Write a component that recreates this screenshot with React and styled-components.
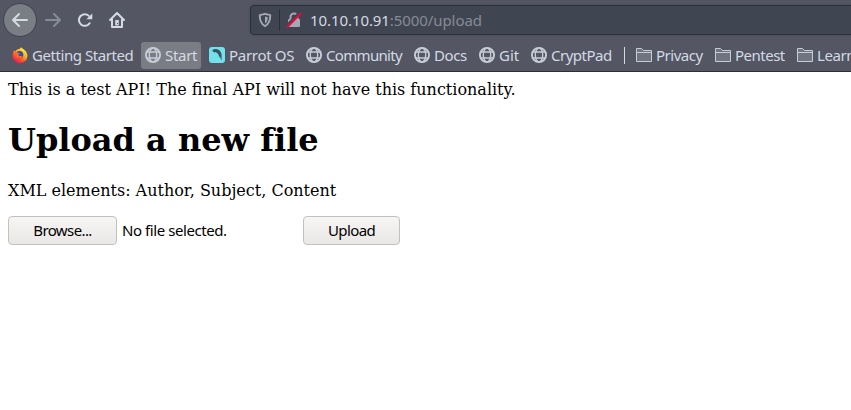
import React from "react";
import styled, { createGlobalStyle } from "styled-components";

const GlobalStyle = createGlobalStyle`
  * { box-sizing: border-box; }
  body { margin: 0; background: #fff; overflow: hidden; }
`;

const Browser = styled.div`
  width: 100vw;
  height: 100vh;
  overflow: hidden;
  background: #fff;
`;

const Chrome = styled.header`
  height: 72px;
  background: #545663;
  border-bottom: 1px solid #2b2d3b;
  font-family: "Noto Sans", "Open Sans", sans-serif;
  color: #d3dae3;
  overflow: hidden;
`;

const NavBar = styled.nav`
  display: flex;
  align-items: center;
  height: 40px;
  padding-left: 3px;
`;

const BackButton = styled.button`
  display: flex;
  align-items: center;
  justify-content: center;
  flex: none;
  width: 34px;
  height: 34px;
  padding: 0;
  border: 1px solid #3e404d;
  border-radius: 50%;
  background: #7b7d85;
`;

const NavButton = styled.button`
  display: flex;
  align-items: center;
  justify-content: center;
  flex: none;
  width: 32px;
  height: 32px;
  padding: 0;
  border: 0;
  background: none;
  opacity: ${(p) => (p.disabled ? 0.4 : 1)};
`;

const AddressBar = styled.div`
  display: flex;
  align-items: center;
  flex: none;
  width: 640px;
  height: 30px;
  margin-left: 117px;
  padding-left: 6px;
  border: 1px solid #2b2e3b;
  border-radius: 4px;
  background: #404552;
  box-shadow: 0 0 3px rgba(40, 42, 54, 0.25);
`;

const AddressDivider = styled.span`
  width: 1px;
  height: 22px;
  margin: 0 6px;
  background: #2b2e3b;
`;

const Url = styled.span`
  margin-left: 8px;
  font-size: 15px;
  line-height: 20px;
  letter-spacing: -0.08px;
  white-space: nowrap;
`;

const UrlPath = styled.span`
  color: #858b95;
`;

const Bookmarks = styled.div`
  display: flex;
  align-items: center;
  gap: 4px;
  height: 31px;
  padding: 0 0 1px 8px;
`;

const Bookmark = styled.a`
  display: flex;
  align-items: center;
  flex: none;
  gap: 4px;
  width: ${(p) => p.$width}px;
  height: 27px;
  padding: 0 4px;
  border-radius: 3px;
  background: ${(p) => (p.$active ? "#7b7d85" : "transparent")};
  font-size: 15px;
  line-height: 20px;
  letter-spacing: ${(p) => p.$spacing || 0}px;
  white-space: nowrap;
`;

const BookmarkDivider = styled.span`
  flex: none;
  width: 1px;
  height: 17px;
  margin: 0 3px 0 5px;
  background: #d3dae3;
`;

const Icon = styled.svg`
  display: block;
  flex: none;
  width: 16px;
  height: 16px;
  overflow: visible;
`;

const Page = styled.main`
  padding: 8px;
  color: #000;
  font: 16px/19px "DejaVu Serif", serif;
`;

const Line = styled.p`
  margin: 0;
`;

const Title = styled.h1`
  margin: 22px 0;
  font-size: 32px;
  line-height: 38px;
  font-weight: bold;
  font-variant-ligatures: none;
`;

const UploadForm = styled.form`
  display: flex;
  align-items: center;
  margin-top: 16px;
  font: 15px/20px "Noto Sans", "Open Sans", sans-serif;
`;

const FormButton = styled.button`
  flex: none;
  width: ${(p) => p.$width}px;
  height: 29px;
  padding: 0 0 2px;
  border: 1px solid #c4c1bc;
  border-radius: 4px;
  background: linear-gradient(#f6f5f4, #eae8e6);
  color: #000;
  font: inherit;
  letter-spacing: -0.6px;
`;

const FileStatus = styled.span`
  flex: none;
  width: 181px;
  padding-bottom: 2px;
  margin-left: 5px;
  letter-spacing: -0.43px;
`;

const Arrow = ({ right }) => (
  <Icon viewBox="0 0 16 16" fill="none" stroke="#d3dae3" strokeWidth="2" strokeLinecap="round" strokeLinejoin="round">
    <path d={right ? "M1 8h14M9 2l6 6-6 6" : "M15 8H1M7 2L1 8l6 6"} />
  </Icon>
);

const Reload = () => (
  <Icon viewBox="0 0 16 16">
    <path d="M12.6 11.2A5.8 5.8 0 1 1 11.8 3.900" fill="none" stroke="#d3dae3" strokeWidth="2" strokeLinecap="round" />
    <path d="M15.300 1.400v5.300a.6.6 0 0 1-.6.6H9.400z" fill="#d3dae3" />
  </Icon>
);

const Home = () => (
  <Icon viewBox="0 0 16 16" fill="none" stroke="#d3dae3" strokeWidth="2" strokeLinecap="round" strokeLinejoin="round">
    <path d="M1 8l7-7 7 7M3 7.500V15h10V7.500" />
    <path d="M8 8v5.500" strokeWidth="3.500" strokeLinecap="butt" />
    <path d="M8.500 11v1" stroke="#545663" strokeWidth="1" strokeLinecap="butt" />
  </Icon>
);

const Shield = () => (
  <Icon viewBox="0 0 16 16">
    <path d="M8 1.800l5.300 1.300c0 5.500-1.200 9-5.300 11.100C3.900 12.100 2.700 8.600 2.700 3.100z" fill="none" stroke="#a3a9b2" strokeWidth="1.900" strokeLinejoin="round" />
    <path d="M8 4.400v7.100c1.900-1.400 2.700-3.400 2.800-6.300z" fill="#a3a9b2" />
  </Icon>
);

const InsecureLock = () => (
  <Icon viewBox="0 0 16 16">
    <path d="M4.500 8V5a3.500 3.500 0 0 1 7 0v3" fill="none" stroke="#a3a9b2" strokeWidth="2" />
    <rect x="2" y="7" width="12" height="8" rx="1" fill="#a3a9b2" />
    <path d="M1 14L14 .6" stroke="#404552" strokeWidth="3.500" />
    <path d="M1.800 14.600L14.600 1.600" stroke="#ff0039" strokeWidth="2" strokeLinecap="round" />
  </Icon>
);

const Globe = () => (
  <Icon viewBox="0 0 16 16" fill="none" stroke="#c6cbd6">
    <circle cx="8" cy="8" r="7.100" strokeWidth="1.900" />
    <ellipse cx="8" cy="8" rx="3.700" ry="7" strokeWidth="1.400" />
    <path d="M2 5h12M2 11h12" strokeWidth="1.500" />
  </Icon>
);

const Folder = () => (
  <Icon viewBox="0 0 16 16">
    <path d="M.5 14.500v-13h5l2 2h8v11z" fill="#707380" stroke="#c6cbd6" strokeLinejoin="round" />
    <path d="M1 5.500h14.500" stroke="#c6cbd6" />
  </Icon>
);

const Firefox = () => (
  <Icon viewBox="0 0 16 16">
    <defs>
      <linearGradient id="flame" x1=".85" y1="0" x2=".2" y2="1">
        <stop stopColor="#fff44f" />
        <stop offset=".38" stopColor="#ffb31d" />
        <stop offset=".7" stopColor="#ff4b2d" />
        <stop offset="1" stopColor="#e20b72" />
      </linearGradient>
    </defs>
    <path d="M2.300 3.200l1 1.400C4.400 2.500 6 2 7.500 2L9 .2c1.100 1.300 2.300 1.700 3.500 2.700 1.500 1.300 2.900 3.300 2.900 6A7.400 7.400 0 0 1 .6 8.800C.6 6.500 1.200 4.700 2.300 3.200z" fill="url(#flame)" />
    <circle cx="7.600" cy="7.800" r="3.700" fill="#2056b5" />
    <path d="M3 5.200c1.500-.5 2.700.1 3.500 1l1.800.3-1.500 1.200c-.7.700.2 1.900 1.700 1.400 1.300-.4 2-.1 1.700.6-1.200 2.600-6.500 2-7.200-1.600z" fill="#ff6826" />
    <path d="M7.800 2.600c2.800.5 4 2.100 4.200 4.300.6-1.800-.1-3.800-1.400-5.100z" fill="#ffde35" />
  </Icon>
);

const Parrot = () => (
  <Icon viewBox="0 0 16 16">
    <rect width="16" height="16" rx="3" fill="#70e1ed" />
    <path d="M3 3.200C6.400 1.200 9.800 2.100 11.500 4.600c1.700 2.400.9 5.700 1.100 9.200-.9-1.500-1.300-3-1.700-4.700l-.9 1.800c.1-2.400-.6-4.200-2.200-5.200L6.200 5l-.9.700-.5-.9-1.200.2.5-1z" fill="#3e515d" />
  </Icon>
);

const places = [
  { label: "Getting Started", width: 129, spacing: -0.43, Mark: Firefox },
  { label: "Start", width: 60, spacing: -0.3, Mark: Globe, active: true },
  { label: "Parrot OS", width: 93, spacing: -0.3, Mark: Parrot },
  { label: "Community", width: 104, spacing: -0.68, Mark: Globe },
  { label: "Docs", width: 61, spacing: -0.4, Mark: Globe },
  { label: "Git", width: 48, spacing: 0, Mark: Globe },
  { label: "CryptPad", width: 88, spacing: -0.5, Mark: Globe },
];

const folders = [
  { label: "Privacy", width: 75, spacing: -0.5 },
  { label: "Pentest", width: 78, spacing: -0.5 },
  { label: "Learn", width: 64, spacing: -0.4 },
];

export default function App() {
  return (
    <Browser>
      <GlobalStyle />
      <Chrome>
        <NavBar>
          <BackButton aria-label="Back"><Arrow /></BackButton>
          <NavButton aria-label="Forward" disabled><Arrow right /></NavButton>
          <NavButton aria-label="Reload"><Reload /></NavButton>
          <NavButton aria-label="Home"><Home /></NavButton>
          <AddressBar>
            <Shield />
            <AddressDivider />
            <InsecureLock />
            <Url>10.10.10.91<UrlPath>:5000/upload</UrlPath></Url>
          </AddressBar>
        </NavBar>
        <Bookmarks>
          {places.map(({ label, width, spacing, Mark, active }) => (
            <Bookmark key={label} $width={width} $spacing={spacing} $active={active}><Mark />{label}</Bookmark>
          ))}
          <BookmarkDivider />
          {folders.map(({ label, width, spacing }) => (
            <Bookmark key={label} $width={width} $spacing={spacing}><Folder />{label}</Bookmark>
          ))}
        </Bookmarks>
      </Chrome>
      <Page>
        <Line>This is a test API! The final API will not have this functionality.</Line>
        <Title>Upload a new file</Title>
        <Line>XML elements: Author, Subject, Content</Line>
        <UploadForm>
          <FormButton type="button" $width={109}>Browse...</FormButton>
          <FileStatus>No file selected.</FileStatus>
          <FormButton type="button" $width={97}>Upload</FormButton>
        </UploadForm>
      </Page>
    </Browser>
  );
}
